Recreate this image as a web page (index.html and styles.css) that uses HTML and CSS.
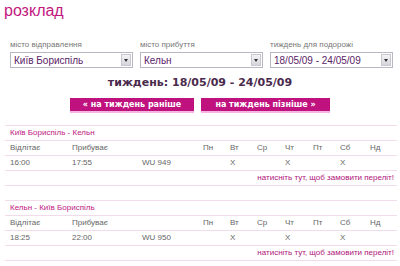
FILE: index.html
```html
<!DOCTYPE html>
<html lang="uk">
<head>
    <meta charset="UTF-8">
    <title>розклад</title>
    <link rel="stylesheet" href="styles.css">
</head>
<body>
    <h1 class="title">розклад</h1>

    <div class="search">
        <div class="field">
            <label>місто відправлення</label>
            <div class="select"><span>Київ Бориспіль</span><b class="arrow"></b></div>
        </div>
        <div class="field">
            <label>місто прибуття</label>
            <div class="select"><span>Кельн</span><b class="arrow"></b></div>
        </div>
        <div class="field">
            <label>тиждень для подорожі</label>
            <div class="select"><span>18/05/09 - 24/05/09</span><b class="arrow"></b></div>
        </div>
    </div>

    <div class="week">тиждень: 18/05/09 - 24/05/09</div>

    <div class="week-nav">
        <a class="nav-btn" href="#">« на тиждень раніше</a>
        <a class="nav-btn" href="#">на тиждень пізніше »</a>
    </div>

    <table class="flights">
        <colgroup>
            <col style="width:62px"><col style="width:70px"><col style="width:61px">
            <col style="width:27px"><col style="width:27px"><col style="width:28px">
            <col style="width:28px"><col style="width:27px"><col style="width:30px">
            <col>
        </colgroup>
        <tr class="route"><td colspan="10">Київ Бориспіль - Кельн</td></tr>
        <tr>
            <td>Відлітає</td><td>Прибуває</td><td></td>
            <td>Пн</td><td>Вт</td><td>Ср</td><td>Чт</td><td>Пт</td><td>Сб</td><td>Нд</td>
        </tr>
        <tr>
            <td>16:00</td><td>17:55</td><td>WU 949</td>
            <td></td><td>X</td><td></td><td>X</td><td></td><td>X</td><td></td>
        </tr>
        <tr class="book"><td colspan="10"><a href="#">натисніть тут, щоб замовити переліт!</a></td></tr>
        <tr class="gap"><td colspan="10"></td></tr>
        <tr class="route"><td colspan="10">Кельн - Київ Бориспіль</td></tr>
        <tr>
            <td>Відлітає</td><td>Прибуває</td><td></td>
            <td>Пн</td><td>Вт</td><td>Ср</td><td>Чт</td><td>Пт</td><td>Сб</td><td>Нд</td>
        </tr>
        <tr>
            <td>18:25</td><td>22:00</td><td>WU 950</td>
            <td></td><td>X</td><td></td><td>X</td><td></td><td>X</td><td></td>
        </tr>
        <tr class="book"><td colspan="10"><a href="#">натисніть тут, щоб замовити переліт!</a></td></tr>
    </table>
</body>
</html>
```

FILE: styles.css
```css
body {
    margin: 0;
    background: #fff;
    font-family: "Liberation Sans", Arial, sans-serif;
    font-size: 8px;
    color: #666;
}
.title {
    margin: 0;
    padding: 2px 0 0 4px;
    font-size: 16px;
    font-weight: normal;
    color: #c2187e;
    line-height: 18px;
}
.search {
    display: grid;
    grid-template-columns: 123px 123px 123px;
    column-gap: 7px;
    padding: 20px 0 0 10px;
}
.field label {
    display: block;
    font-size: 8px;
    line-height: 10px;
    color: #777;
    margin-bottom: 2px;
}
.select {
    height: 14px;
    border: 1px solid #b8b8c4;
    display: flex;
    align-items: center;
    justify-content: space-between;
    padding-left: 3px;
    font-size: 10px;
    color: #5b2368;
}
.arrow {
    width: 10px;
    height: 12px;
    margin-right: 1px;
    background: linear-gradient(#f4f4f6, #d4d4dc);
    border: 1px solid #c8c8d0;
    box-sizing: border-box;
    position: relative;
}
.arrow::after {
    content: "";
    position: absolute;
    left: 2px;
    top: 4px;
    border-left: 2px solid transparent;
    border-right: 2px solid transparent;
    border-top: 3px solid #333;
}
.week {
    text-align: center;
    font-family: "DejaVu Sans", Verdana, sans-serif;
    font-weight: bold;
    font-size: 11px;
    color: #4a2a4c;
    margin-top: 8px;
    line-height: 14px;
}
.week-nav {
    display: flex;
    justify-content: center;
    gap: 7px;
    margin-top: 8px;
}
.nav-btn {
    display: block;
    width: 124px;
    height: 13px;
    line-height: 13px;
    background: #c0127f;
    border-bottom: 2px solid #f4b6e0;
    color: #fff;
    text-align: center;
    font-family: "DejaVu Sans", Verdana, sans-serif;
    font-weight: bold;
    font-size: 8px;
    text-decoration: none;
}
.nav-btn + .nav-btn {
    width: 129px;
}
.flights {
    margin: 12px 0 0 5px;
    width: 392px;
    table-layout: fixed;
    border-collapse: collapse;
}
.flights td {
    height: 14px;
    padding: 0 0 0 5px;
    border-bottom: 1px solid #f2dcec;
    white-space: nowrap;
    line-height: 14px;
}
.flights .route td {
    border-top: 1px solid #f2dcec;
    color: #c0197f;
}
.flights .book td {
    text-align: right;
    padding-right: 3px;
}
.flights .book a {
    color: #b0137a;
    text-decoration: none;
}
.flights .gap td {
    border-bottom: none;
}
```
